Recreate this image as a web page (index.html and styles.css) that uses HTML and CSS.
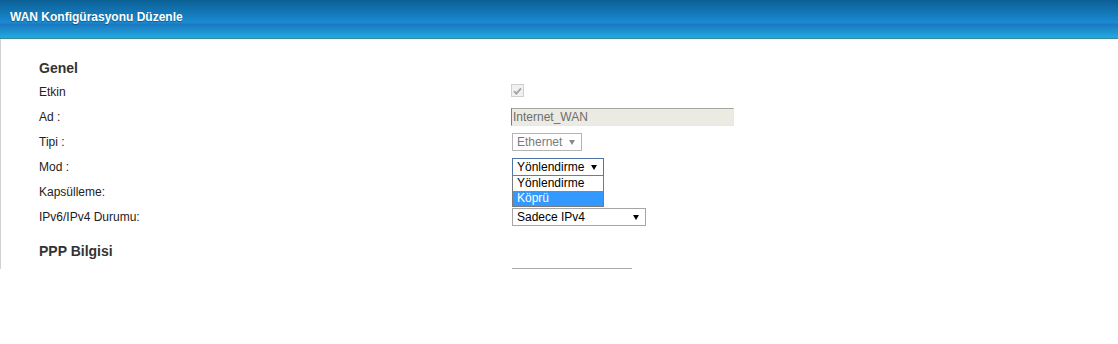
FILE: index.html
```html
<!DOCTYPE html>
<html lang="tr">
<head>
    <meta charset="UTF-8">
    <meta name="viewport" content="width=device-width, initial-scale=1.0">
    <title>WAN Konfigürasyonu Düzenle</title>
    <link rel="stylesheet" href="styles.css">
</head>
<body>
    <div class="titlebar">WAN Konfigürasyonu Düzenle</div>
    <div class="panel">
        <h2 class="section-title">Genel</h2>
        <div class="form-row">
            <label>Etkin</label>
            <div class="field">
                <span class="checkbox">
                    <svg width="9" height="8" viewBox="0 0 9 8"><path d="M1 4.2 L3.4 6.6 L8 1.4" fill="none" stroke="#a3a3a3" stroke-width="1.8"/></svg>
                </span>
            </div>
        </div>
        <div class="form-row">
            <label>Ad :</label>
            <div class="field"><input type="text" class="text-input" value="Internet_WAN" disabled></div>
        </div>
        <div class="form-row">
            <label>Tipi :</label>
            <div class="field">
                <span class="select disabled w70"><select disabled><option>Ethernet</option></select></span>
            </div>
        </div>
        <div class="form-row">
            <label>Mod :</label>
            <div class="field">
                <span class="select focused w92">
                    <select><option>Yönlendirme</option><option>Köprü</option></select>
                    <ul class="dropdown">
                        <li>Yönlendirme</li>
                        <li class="active">Köprü</li>
                    </ul>
                </span>
            </div>
        </div>
        <div class="form-row">
            <label>Kapsülleme:</label>
            <div class="field">
                <span class="select w90"><select><option>PPPoE</option></select></span>
            </div>
        </div>
        <div class="form-row">
            <label>IPv6/IPv4 Durumu:</label>
            <div class="field">
                <span class="select w134"><select><option>Sadece IPv4</option></select></span>
            </div>
        </div>
        <h2 class="section-title spaced">PPP Bilgisi</h2>
        <div class="form-row">
            <label></label>
            <div class="field"><input type="text" class="text-input plain" value=""></div>
        </div>
    </div>
</body>
</html>
```

FILE: styles.css
```css
body {
    margin: 0;
    background: #fff;
    font-family: "Liberation Sans", Arial, sans-serif;
    font-size: 12px;
    color: #333;
}
.titlebar {
    height: 38px;
    line-height: 35px;
    padding-left: 10px;
    color: #fff;
    font-weight: bold;
    font-size: 12px;
    text-shadow: 0 1px 1px rgba(0,0,0,0.35);
    background: linear-gradient(to bottom, #0b6095 0px, #1a8bd3 23px, #1b77c0 24px, #21aadf 38px);
    border-bottom: 1px solid #35899c;
}
.panel {
    height: 230px;
    overflow: hidden;
    border-left: 1px solid #d2d2d2;
    padding: 20px 0 0 38px;
    box-sizing: border-box;
}
.section-title {
    margin: 0;
    height: 20px;
    line-height: 18px;
    font-size: 14px;
    font-weight: bold;
    color: #333;
}
.section-title.spaced {
    margin-top: 13px;
    margin-bottom: 2px;
}
.form-row {
    display: grid;
    grid-template-columns: 473px auto;
    height: 25px;
    align-items: center;
}
.form-row label {
    color: #222;
}
.field {
    display: flex;
    align-items: center;
}
.checkbox {
    width: 11px;
    height: 11px;
    margin: -2px 0 0 -1px;
    border: 1px solid #cfcfcf;
    background: #f1f1f1;
    display: flex;
    align-items: center;
    justify-content: center;
}
.text-input {
    width: 223px;
    height: 18px;
    box-sizing: border-box;
    margin: 0 0 0 -1px;
    padding: 0 0 0 1px;
    font-family: "Liberation Sans", Arial, sans-serif;
    font-size: 12px;
    color: #6d6d6d;
    background: #ebebe4;
    border-style: solid;
    border-width: 1px;
    border-color: #a5a5a5 #e8e8e8 #e8e8e8 #7b7b7b;
}
.text-input.plain {
    width: 120px;
    margin-left: 0;
    background: #fff;
    border: 1px solid #a9a9a9;
}
.select {
    position: relative;
    display: inline-block;
    height: 18px;
}
.select select {
    appearance: none;
    -webkit-appearance: none;
    width: 100%;
    height: 18px;
    margin: 0;
    padding: 0 0 0 4px;
    font-family: "Liberation Sans", Arial, sans-serif;
    font-size: 12px;
    color: #000;
    background: #fff;
    border: 1px solid #a6a6a6;
    border-radius: 0;
    outline: none;
}
.select::after {
    content: "";
    position: absolute;
    right: 7px;
    top: 7px;
    border-left: 3px solid transparent;
    border-right: 3px solid transparent;
    border-top: 5px solid #000;
}
.select.disabled select {
    color: #7a7a7a;
    border-color: #b4b4b4;
    opacity: 1;
}
.select.disabled::after {
    border-top-color: #8a8a8a;
}
.select.focused select {
    border-color: #4f75a8;
}
.w70 { width: 70px; }
.w90 { width: 90px; }
.w92 { width: 92px; }
.w134 { width: 134px; }
.dropdown {
    position: absolute;
    z-index: 10;
    top: 17px;
    left: 0;
    width: 92px;
    box-sizing: border-box;
    margin: 0;
    padding: 0;
    list-style: none;
    background: #fff;
    border: 1px solid #7a7a7a;
}
.dropdown li {
    height: 15px;
    line-height: 15px;
    padding-left: 4px;
    color: #000;
}
.dropdown li.active {
    background: #3399ff;
    color: #fff;
}
```
